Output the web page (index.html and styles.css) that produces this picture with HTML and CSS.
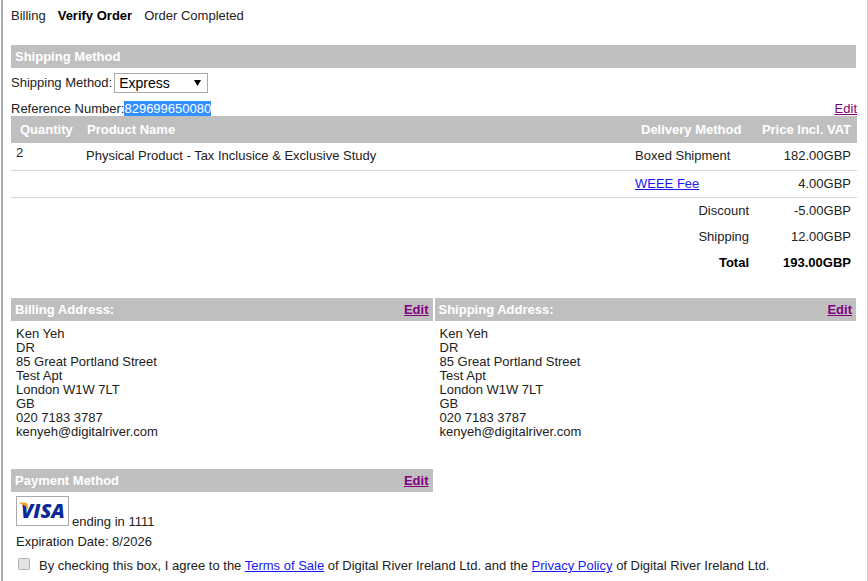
FILE: index.html
```html
<!DOCTYPE html>
<html lang="en">
<head>
<meta charset="utf-8">
<title>Verify Order</title>
<link rel="stylesheet" href="styles.css">
</head>
<body>
<main class="page">
  <ol class="steps">
    <li>Billing</li>
    <li class="current">Verify Order</li>
    <li>Order Completed</li>
  </ol>

  <h2 class="bar">Shipping Method</h2>
  <div class="method">
    <label for="method">Shipping Method:</label>
    <span class="picker">
      <select id="method"><option>Express</option></select>
      <svg class="arrow" width="7" height="7" viewBox="0 0 8 8" aria-hidden="true"><path d="M0 1h8L4 8z"/></svg>
    </span>
  </div>
  <div class="reference">
    <span>Reference Number:<mark>829699650080</mark></span>
    <a class="visited" href="#cart">Edit</a>
  </div>

  <table class="order">
    <thead>
      <tr><th class="qty">Quantity</th><th class="name">Product Name</th><th class="delivery">Delivery Method</th><th class="price">Price Incl. VAT</th></tr>
    </thead>
    <tbody>
      <tr><td class="count">2</td><td>Physical Product - Tax Inclusice &amp; Exclusive Study</td><td>Boxed Shipment</td><td class="price">182.00GBP</td></tr>
      <tr><td></td><td></td><td><a href="#weee">WEEE Fee</a></td><td class="price">4.00GBP</td></tr>
    </tbody>
    <tfoot>
      <tr><td class="sum" colspan="3">Discount</td><td class="price">-5.00GBP</td></tr>
      <tr><td class="sum" colspan="3">Shipping</td><td class="price">12.00GBP</td></tr>
      <tr class="total"><td class="sum" colspan="3">Total</td><td class="price">193.00GBP</td></tr>
    </tfoot>
  </table>

  <div class="details">
    <section>
      <h2 class="bar">Billing Address: <a class="visited" href="#billing">Edit</a></h2>
      <address>Ken Yeh<br>DR<br>85 Great Portland Street<br>Test Apt<br>London W1W 7LT<br>GB<br>020 7183 3787<br>kenyeh@digitalriver.com</address>
    </section>
    <section>
      <h2 class="bar">Shipping Address: <a class="visited" href="#shipping">Edit</a></h2>
      <address>Ken Yeh<br>DR<br>85 Great Portland Street<br>Test Apt<br>London W1W 7LT<br>GB<br>020 7183 3787<br>kenyeh@digitalriver.com</address>
    </section>
    <section>
      <h2 class="bar">Payment Method <a class="visited" href="#payment">Edit</a></h2>
      <div class="card">
        <svg class="visa" width="53" height="30" viewBox="0 0 53 30" role="img" aria-label="Visa">
          <rect x=".5" y=".5" width="52" height="29" fill="#fff" stroke="#aaa"/>
          <text x="5" y="22" class="visa-name">VISA</text>
          <path d="M3 6.500h6.500q1.500 0 2 2l1 5.500Q9.500 9 3 7z" fill="#f5a31a"/>
        </svg>
        <span>ending in 1111</span>
      </div>
      <p class="expiry">Expiration Date: 8/2026</p>
    </section>
  </div>

  <div class="terms">
    <input type="checkbox" id="agree">
    <label for="agree">By checking this box, I agree to the <a href="#terms">Terms of Sale</a> of Digital River Ireland Ltd. and the <a href="#privacy">Privacy Policy</a> of Digital River Ireland Ltd.</label>
  </div>
</main>
</body>
</html>
```
FILE: styles.css
```css
* { box-sizing: border-box; }

body {
  margin: 0;
  background: #fff;
  color: #222;
  font: 13px/16px "Liberation Sans", Arial, sans-serif;
}

a { color: #1a1aee; }
a.visited { color: #800080; }

.page {
  min-height: 100vh;
  margin-left: 1px;
  padding: 8px 11px 0 8px;
  border-left: 2px solid #a9a9a9;
  border-right: 1px solid #d0d0d0;
}

.steps {
  display: flex;
  gap: 12px;
  margin: 0 0 21px;
  padding: 0;
  list-style: none;
}
.current { color: #000; font-weight: bold; }

.bar {
  display: flex;
  justify-content: space-between;
  margin: 0;
  padding: 4px 4px 3px;
  background: #bfbfbf;
  color: #fff;
  font-size: 13px;
  line-height: 16px;
}

.method {
  display: flex;
  align-items: center;
  gap: 2px;
  margin-top: 5px;
}
.picker { position: relative; display: flex; }
.picker select {
  width: 94px;
  height: 20px;
  padding: 0 4px;
  border: 1px solid #aaa;
  border-radius: 0;
  background: #fff;
  color: #000;
  font: 14px/18px "Liberation Sans", Arial, sans-serif;
  appearance: none;
}
.arrow {
  position: absolute;
  top: 6px;
  right: 7px;
  pointer-events: none;
}

.reference {
  display: flex;
  justify-content: space-between;
  margin: 8px -1px 0 0;
  line-height: 15px;
}
mark { background: #3390ff; color: #fff; }

.order {
  width: calc(100% + 1px);
  border-collapse: collapse;
}
.order th {
  height: 27px;
  padding: 0 6px;
  background: #bfbfbf;
  color: #fff;
  text-align: left;
}
.order th.qty { width: 70px; padding-left: 9px; }
.order th.delivery { width: 119px; padding-left: 11px; }
.order td { height: 26px; padding: 0 5px; }
.order tbody td { height: 27px; border-bottom: 1px solid #d4d4d4; }
.order tfoot td { padding-top: 2px; }
.order td.count { padding-bottom: 6px; }
.order .price { width: 108px; padding-right: 6px; text-align: right; }
.order .sum { padding-right: 0; text-align: right; }
.total { color: #000; font-weight: bold; }

.details {
  display: grid;
  grid-template-columns: 1fr 1fr;
  gap: 30px 2px;
  margin-top: 23px;
}
address {
  padding: 6px 5px 0;
  font-style: normal;
  line-height: 14px;
}

.card {
  display: flex;
  align-items: flex-end;
  gap: 3px;
  padding: 4px 5px 0;
}
.card span { line-height: 8px; }
.visa-name {
  fill: #0a2a94;
  font: italic 800 20px "Open Sans", sans-serif;
}
.expiry { margin: 8px 5px 0; }

.terms {
  display: flex;
  gap: 9px;
  margin-top: 8px;
  padding-left: 7px;
}
.terms input {
  width: 12px;
  height: 12px;
  margin: 0;
  border: 1px solid #b0b0b0;
  border-radius: 2px;
  background: #e4e4e4;
  appearance: none;
}
.terms input:checked { background: #3390ff; }
```
